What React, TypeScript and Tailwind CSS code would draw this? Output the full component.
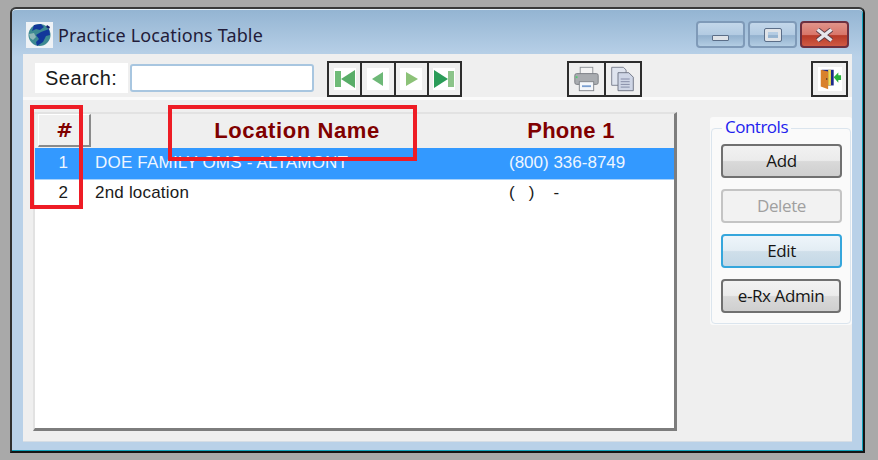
import React from "react";

const sans = "[font-family:'Liberation_Sans',Arial,sans-serif]";

function Globe() {
  return (
    <svg width="27" height="26" viewBox="0 0 27 26" className="shrink-0">
      <rect width="27" height="26" fill="#eef2f6" />
      <circle cx="13.5" cy="13" r="11" fill="#3d8a92" />
      <path d="M8 3l7-1 3 3-4 3-4-1-4 2zM15 10l8-3 1 6-4 1-3 6-6 4-1-4 3-3-3-4z" fill="#12379a" />
      <path d="M3 12l5-1 2 4-3 3-3-2z" fill="#8fb7b8" />
      <path d="M21 3l3 2-1 2-3-2z" fill="#10206a" />
    </svg>
  );
}

function Nav({ kind }: { kind: "first" | "prev" | "next" | "last" }) {
  const d = {
    first: <><rect x="1" y="3" width="6" height="16" fill="#6fbb78" /><path d="M21 2v18L7 11z" fill="#58ad68" /></>,
    prev: <path d="M16 4v14L5 11z" fill="#6db877" />,
    next: <path d="M6 4v14l12-7z" fill="#8cc278" />,
    last: <><rect x="15" y="3" width="6" height="16" fill="#8cc48a" /><path d="M1 2v18l14-9z" fill="#2a9c58" /></>,
  }[kind];
  return (
    <div className="flex-1 h-full border-r-2 last:border-r-0 border-[#2c2c2c] flex items-center justify-center">
      <svg width="22" height="22" viewBox="0 0 22 22"><rect width="22" height="22" fill="#fff" />{d}</svg>
    </div>
  );
}

function Printer() {
  return (
    <svg width="27" height="28" viewBox="0 0 30 30">
      <rect x="8" y="2" width="14" height="8" fill="#f3f3f3" stroke="#8b8f94" />
      <rect x="2" y="9" width="26" height="12" rx="2" fill="#a9acb0" stroke="#777b80" />
      <rect x="3" y="12" width="2" height="2" fill="#4bd06c" />
      <rect x="7" y="18" width="16" height="10" fill="#f4f7fb" stroke="#7d8187" />
      <rect x="10" y="22" width="10" height="2" fill="#7a9fd0" />
    </svg>
  );
}

function Copy() {
  return (
    <svg width="27" height="28" viewBox="0 0 30 30">
      <path d="M3 2h13l3 3v17H3z" fill="#dfe4ee" stroke="#767a8a" />
      <path d="M10 8h12l5 5v15H10z" fill="#cfd6e6" stroke="#6a6f80" />
      <path d="M13 15h10M13 18h10M13 21h10M13 24h10" stroke="#7d84a0" />
    </svg>
  );
}

function Exit() {
  return (
    <svg width="24" height="24" viewBox="0 0 26 26">
      <rect width="26" height="26" fill="#fff" />
      <rect x="4" y="3" width="13" height="17" fill="#1c2a8c" />
      <rect x="11" y="3" width="3" height="17" fill="#f0dc52" />
      <path d="M3 3l8 2v19l-8-3z" fill="#d9812c" />
      <rect x="9" y="12" width="1" height="2" fill="#333" />
      <path d="M17 11l5-5v3h3v5h-3v3z" fill="#28b13c" />
    </svg>
  );
}

function Btn({ label, variant = "normal", w = "w-[121px]" }: { label: string; variant?: "normal" | "disabled" | "focus"; w?: string }) {
  const cls = {
    normal: "border-[#707070] bg-[linear-gradient(#f2f2f2_0%,#ebebeb_48%,#d9d9d9_52%,#cfcfcf_100%)] text-[#151515]",
    disabled: "border-[#c4c4c4] bg-[#f2f2f2] text-[#a0a0a0]",
    focus: "border-[#35a6dc] bg-[linear-gradient(#eef5fa_0%,#e3edf4_48%,#cfdfea_52%,#c4d8e6_100%)] text-[#151515]",
  }[variant];
  return (
    <div className={`${w} h-[34px] rounded-[4px] border-2 flex items-center justify-center text-[17px] [font-family:'Open_Sans',sans-serif] tracking-[-0.4px] ${cls}`}>{label}</div>
  );
}

function Row({ num, name, phone, selected }: { num: string; name: string; phone: string; selected?: boolean }) {
  return (
    <div className={`h-[32px] flex items-center text-[17px] ${selected ? "pb-[2px] bg-[#3399ff] text-[#eef6ff] border-b border-[#a8d2fb]" : "pb-[6px] text-[#1a1a1a]"}`}>
      <div className="w-[33px] text-right shrink-0">{num}</div>
      <div className="ml-[27px] w-[414px] shrink-0 whitespace-nowrap tracking-[0.2px]">{name}</div>
      <div className="whitespace-pre">{phone}</div>
    </div>
  );
}

const capBtn = "w-[49px] h-[27px] rounded-[4px] border-2 border-[#7f9ab8] bg-[linear-gradient(#c3d7ea_0%,#b3cbe2_50%,#93b1ce_55%,#b3cde3_100%)] flex items-center justify-center";

export default function App() {
  return (
    <div className={`w-[878px] h-[460px] bg-[#a9a9a9] pt-[7px] pl-[10px] overflow-hidden relative ${sans}`}>
      <div className="w-[855px] h-[446px] rounded-t-[6px] border-2 border-t-[#3a3a3a] border-l-[#2f2f2f] border-r-[#151515] border-b-[#151515] bg-[linear-gradient(#93b4d2_0,#b9d1e8_48px,#b9d1e8_100%)] px-[11px] flex flex-col shadow-[inset_0_1px_0_#e6f0f8,inset_-1px_0_0_#10a0b8,inset_0_-1px_0_#10a0b8]">
        {/* Title bar */}
        <div className="h-[45px] shrink-0 flex items-center pl-[3px] pr-[1px] pt-[7px]">
          <Globe />
          <span className="ml-[5px] text-[18px] text-[#221c3a] [font-family:'Noto_Sans',sans-serif] tracking-[0.15px]">Practice Locations Table</span>
          <div className="ml-auto flex gap-[3px] mr-[2px] -mt-[1px]">
            <div className={capBtn}>
              <div className="w-[17px] h-[6px] mt-[6px] bg-[#dfe3e8] border border-[#5b6e88] rounded-[1px]" />
            </div>
            <div className={capBtn}>
              <div className="w-[16px] h-[12px] border-[3px] border-[#dfe3e8] outline outline-1 outline-[#5b6e88] rounded-[1px]" />
            </div>
            <div className="w-[49px] h-[27px] rounded-[4px] border-2 border-[#6d3040] bg-[linear-gradient(#e0948a_0%,#d9766a_50%,#b83a28_55%,#cf5a44_100%)] flex items-center justify-center">
              <svg width="19" height="14" viewBox="0 0 19 14">
                <path d="M2.5 1.5L16.5 12.5M16.5 1.5L2.5 12.5" stroke="#5a3a44" strokeWidth="5" />
                <path d="M2.5 1.5L16.5 12.5M16.5 1.5L2.5 12.5" stroke="#e6e6ec" strokeWidth="3.4" />
              </svg>
            </div>
          </div>
        </div>

        {/* Client area */}
        <div className="flex-1 bg-[#efefef] flex flex-col border-b border-[#d6dde4]">
          {/* Toolbar */}
          <div className="h-[46px] shrink-0 flex items-start pt-[7px] border-b-[3px] border-[#fafafa]">
            <div className="ml-[12px] mt-[2px] w-[93px] h-[30px] bg-white flex items-center pl-[10px] text-[20px] tracking-[0.5px] text-[#1a1a1a]">Search:</div>
            <div className="ml-[2px] mt-[3px] w-[184px] h-[28px] bg-white rounded-[3px] border-2 border-[#a8c6e0]" />
            <div className="ml-[13px] flex border-2 border-[#2c2c2c] h-[36px] w-[135px]">
              <Nav kind="first" /><Nav kind="prev" /><Nav kind="next" /><Nav kind="last" />
            </div>
            <div className="ml-[105px] flex border-2 border-[#2c2c2c] h-[36px] w-[75px]">
              <div className="flex-1 border-r-2 border-[#2c2c2c] flex items-center justify-center"><Printer /></div>
              <div className="flex-1 flex items-center justify-center"><Copy /></div>
            </div>
            <div className="ml-[169px] w-[37px] h-[36px] border-2 border-[#2c2c2c] flex items-center justify-center">
              <Exit />
            </div>
          </div>

          {/* Body */}
          <div className="flex flex-1 pt-[12px] pl-[10px]">
            <div className="w-[644px] h-[319px] shrink-0 bg-white border-l-2 border-t-2 border-[#e2e2e2] border-r-[3px] border-r-[#7d7d7d] border-b-[3px] border-b-[#7d7d7d] flex flex-col">
              <div className="h-[34px] pb-[1px] shrink-0 bg-[#efefef] flex items-center text-[22px] font-bold text-[#800000] tracking-[0.6px]">
                <div className="ml-[3px] w-[53px] h-[33px] shrink-0 bg-[#f0f0f0] border-r-2 border-b-2 border-[#8a8a8a] border-l border-t border-l-white border-t-white flex items-center justify-center text-[20px] pl-[2px] [font-family:'DejaVu_Sans',sans-serif]">#</div>
                <div className="w-[410px] pl-[2px] shrink-0 text-center">Location Name</div>
                <div className="w-[136px] ml-[2px] text-center tracking-[0.3px]">Phone 1</div>
              </div>
              <Row num="1" name="DOE FAMILY OMS - ALTAMONT" phone="(800) 336-8749" selected />
              <Row num="2" name="2nd location" phone="(   )    -" />
            </div>

            {/* Controls */}
            <div className="ml-[33px] mt-[5px] w-[142px] h-[208px] relative">
              <div className="absolute inset-0 bg-[#fafafa] rounded-[3px]" />
              <div className="absolute left-[1px] right-[1px] top-[11px] bottom-[1px] rounded-[4px] border border-[#dbe5ee]" />
              <span className="absolute left-[12px] top-0 px-[3px] bg-[#fafafa] text-[#2222ee] text-[17px] leading-[20px] [font-family:'Open_Sans',sans-serif] tracking-[-0.5px]">Controls</span>
              <div className="absolute inset-x-0 top-[27px] bottom-0 flex flex-col items-start gap-[11px] pl-[11px]">
                <Btn label="Add" />
                <Btn label="Delete" variant="disabled" />
                <Btn label="Edit" variant="focus" />
                <Btn label="e-Rx Admin" w="w-[120px]" />
              </div>
            </div>
          </div>
        </div>
        <div className="h-[9px] shrink-0" />
      </div>

      {/* Red annotation rectangles */}
      <div className="absolute left-[30px] top-[105px] w-[53px] h-[104px] border-[4px] border-[#ee1c25]" />
      <div className="absolute left-[168px] top-[105px] w-[249px] h-[56px] border-[4px] border-[#ee1c25]" />
    </div>
  );
}
